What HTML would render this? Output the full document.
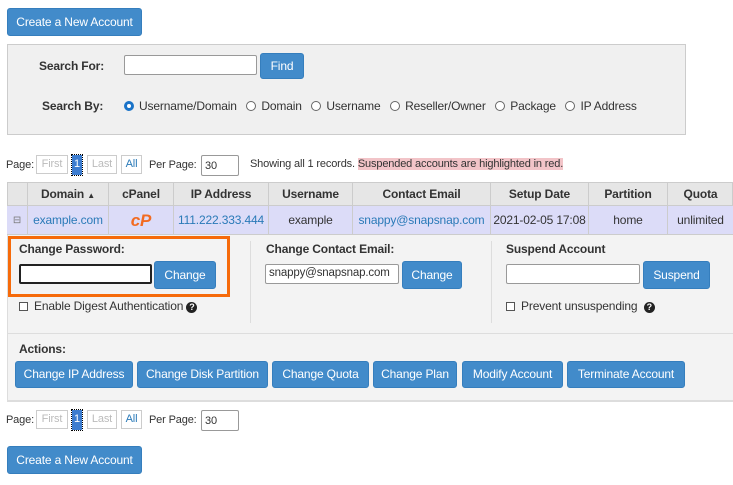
<!DOCTYPE html><html><head><style>
*{box-sizing:border-box;margin:0;padding:0}
body{width:733px;height:485px;background:#fff;font-family:"Liberation Sans",sans-serif;font-size:12px;color:#333;position:relative;overflow:hidden;letter-spacing:-0.15px}
.a{position:absolute;white-space:nowrap}
.btn{position:absolute;background:#428bca;color:#fff;border:1px solid #357ebd;border-radius:3px;text-align:center;font-size:12px}
.inp{position:absolute;background:#fff;border:1px solid #999;border-radius:2px}
.b{font-weight:bold}
.rad{display:inline-block;width:10px;height:10px;border:1px solid #666;border-radius:50%;vertical-align:-1px;margin-right:5px;background:#fff}
.pg{position:absolute;border:1px solid #ccc;color:#bbb;font-size:11px;text-align:center;height:19px;line-height:17px;background:#fff}
.th{position:absolute;top:182px;height:24px;line-height:24px;text-align:center;font-weight:bold;border-left:1px solid #ccc}
.td{position:absolute;top:206px;height:29px;line-height:29px;text-align:center;border-left:1px solid #ccc}
.lk{color:#2a7ab8}
.cb{display:inline-block;width:9px;height:9px;border:1px solid #555;vertical-align:-1px;margin-right:6px;background:#fff}
.q{display:inline-block;width:11px;height:11px;border-radius:50%;background:#222;color:#fff;font-size:9px;line-height:11px;text-align:center;font-weight:bold}
</style></head><body>
<div class="btn" style="left:7px;top:8px;width:135px;height:28px;line-height:26px">Create a New Account</div>
<div class="a" style="left:7px;top:44px;width:679px;height:91px;background:#f0f0f0;border:1px solid #ccc"></div>
<div class="a b" style="left:39px;top:59px">Search For:</div>
<div class="inp" style="left:124px;top:55px;width:133px;height:20px"></div>
<div class="btn" style="left:260px;top:53px;width:44px;height:26px;line-height:24px">Find</div>
<div class="a b" style="left:42px;top:99px">Search By:</div>
<div class="a" style="left:124px;top:99px"><span class="rad" style="border:3px solid #1a73c8"></span>Username/Domain &nbsp;&nbsp;<span class="rad"></span>Domain &nbsp;&nbsp;<span class="rad"></span>Username &nbsp;&nbsp;<span class="rad"></span>Reseller/Owner &nbsp;&nbsp;<span class="rad"></span>Package &nbsp;&nbsp;<span class="rad"></span>IP Address</div>

<div class="a" style="left:6px;top:159px;font-size:11px">Page:</div>
<div class="pg" style="left:36px;top:155px;width:32px">First</div>
<div class="a" style="left:72px;top:155px;width:10px;height:20px;background:#3d7dd0;color:#fff;font-size:11px;text-align:center;line-height:19px;outline:1px dotted #000">1</div>
<div class="pg" style="left:87px;top:155px;width:30px">Last</div>
<div class="pg" style="left:121px;top:155px;width:21px;color:#2a7ab8">All</div>
<div class="a" style="left:149px;top:159px;font-size:11px">Per Page:</div>
<div class="inp" style="left:201px;top:155px;width:38px;height:21px;padding:4px 3px 0;font-size:11px">30</div>
<div class="a" style="left:250px;top:158px;font-size:11px">Showing all 1 records. <span style="background:#f2c4c8">Suspended accounts are highlighted in red.</span></div>

<div class="a" style="left:7px;top:182px;width:726px;height:24px;background:#e6e6e6;border:1px solid #ccc"></div>
<div class="a" style="left:7px;top:206px;width:726px;height:29px;background:#dcdcf8;border-bottom:1px solid #ccc"></div>
<div class="th" style="left:27px;width:81px">Domain <span style="font-size:8px">▲</span></div>
<div class="th" style="left:108px;width:65px">cPanel</div>
<div class="th" style="left:173px;width:95px">IP Address</div>
<div class="th" style="left:268px;width:84px">Username</div>
<div class="th" style="left:352px;width:138px">Contact Email</div>
<div class="th" style="left:490px;width:98px">Setup Date</div>
<div class="th" style="left:588px;width:79px">Partition</div>
<div class="th" style="left:667px;width:66px">Quota</div>
<div class="td" style="left:7px;width:20px;border:0;font-size:10px;color:#777">⊟</div>
<div class="td lk" style="left:27px;width:81px">example.com</div>
<div class="td" style="left:108px;width:65px;color:#f26b21;font-weight:bold;font-style:italic;font-size:17px">cP</div>
<div class="td lk" style="left:173px;width:95px">111.222.333.444</div>
<div class="td" style="left:268px;width:84px">example</div>
<div class="td lk" style="left:352px;width:138px">snappy@snapsnap.com</div>
<div class="td" style="left:490px;width:98px">2021-02-05 17:08</div>
<div class="td" style="left:588px;width:79px">home</div>
<div class="td" style="left:667px;width:66px">unlimited</div>

<div class="a" style="left:7px;top:235px;width:726px;height:167px;background:#f3f3f3;border-bottom:2px solid #ddd;border-left:1px solid #ddd"></div>
<div class="a" style="left:8px;top:236px;width:222px;height:61px;border:3px solid #f66a0a"></div>
<div class="a b" style="left:19px;top:242px">Change Password:</div>
<div class="inp" style="left:19px;top:264px;width:133px;height:20px;border:2px solid #222"></div>
<div class="btn" style="left:154px;top:261px;width:62px;height:28px;line-height:26px">Change</div>
<div class="a" style="left:19px;top:299px"><span class="cb"></span>Enable Digest Authentication <span class="q">?</span></div>
<div class="a" style="left:250px;top:241px;width:1px;height:82px;background:#ddd"></div>
<div class="a b" style="left:266px;top:242px">Change Contact Email:</div>
<div class="inp" style="left:265px;top:264px;width:134px;height:20px;padding:2px 3px 0;font-size:11.5px">snappy@snapsnap.com</div>
<div class="btn" style="left:402px;top:261px;width:60px;height:28px;line-height:26px">Change</div>
<div class="a" style="left:491px;top:241px;width:1px;height:82px;background:#ddd"></div>
<div class="a b" style="left:506px;top:242px">Suspend Account</div>
<div class="inp" style="left:506px;top:264px;width:134px;height:20px"></div>
<div class="btn" style="left:643px;top:261px;width:67px;height:28px;line-height:26px">Suspend</div>
<div class="a" style="left:506px;top:299px"><span class="cb"></span>Prevent unsuspending &nbsp;<span class="q">?</span></div>
<div class="a" style="left:8px;top:333px;width:725px;height:1px;background:#ddd"></div>
<div class="a b" style="left:19px;top:342px">Actions:</div>
<div class="btn" style="left:15px;top:361px;width:118px;height:27px;line-height:25px">Change IP Address</div>
<div class="btn" style="left:137px;top:361px;width:131px;height:27px;line-height:25px">Change Disk Partition</div>
<div class="btn" style="left:272px;top:361px;width:97px;height:27px;line-height:25px">Change Quota</div>
<div class="btn" style="left:373px;top:361px;width:84px;height:27px;line-height:25px">Change Plan</div>
<div class="btn" style="left:462px;top:361px;width:101px;height:27px;line-height:25px">Modify Account</div>
<div class="btn" style="left:567px;top:361px;width:118px;height:27px;line-height:25px">Terminate Account</div>

<div class="a" style="left:6px;top:414px;font-size:11px">Page:</div>
<div class="pg" style="left:36px;top:410px;width:32px">First</div>
<div class="a" style="left:72px;top:410px;width:10px;height:20px;background:#3d7dd0;color:#fff;font-size:11px;text-align:center;line-height:19px;outline:1px dotted #000">1</div>
<div class="pg" style="left:87px;top:410px;width:30px">Last</div>
<div class="pg" style="left:121px;top:410px;width:21px;color:#2a7ab8">All</div>
<div class="a" style="left:149px;top:414px;font-size:11px">Per Page:</div>
<div class="inp" style="left:201px;top:410px;width:38px;height:21px;padding:4px 3px 0;font-size:11px">30</div>
<div class="btn" style="left:7px;top:446px;width:135px;height:28px;line-height:26px">Create a New Account</div>
</body></html>
